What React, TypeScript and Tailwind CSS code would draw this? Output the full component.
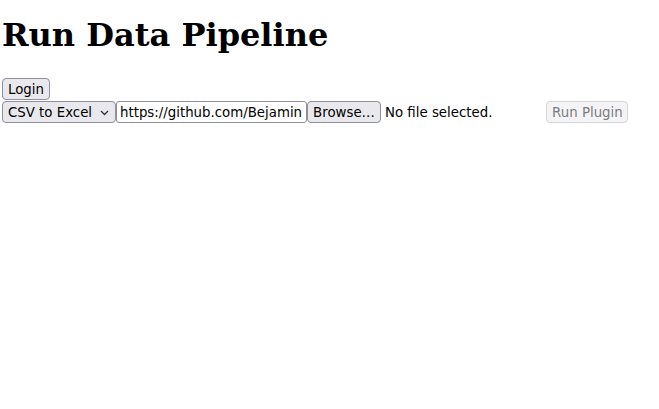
export default function App() {
  const btn =
    'h-[22px] px-[5px] pt-px border border-[#8f8f9d] rounded-[4px] bg-[#e9e9ed] text-black leading-none flex items-center'

  return (
    <div className="min-h-[409px] bg-white px-[2px] font-['DejaVu_Sans',sans-serif] text-[13.33px] text-black">
      {/* heading */}
      <h1 className="pt-[17px] pb-[24px] text-[32px] leading-[37px] font-bold font-['DejaVu_Serif',serif]">
        Run Data Pipeline
      </h1>

      <div className="flex">
        <button className={btn + ' w-[48px] justify-center'}>Login</button>
      </div>

      {/* plugin row */}
      <div className="mt-px flex items-center">
        <div className={btn + ' w-[114px] justify-between pl-[5px] pr-[6px]'}>
          <span>CSV to Excel</span>
          <svg width="9" height="6" viewBox="0 0 9 6" fill="none">
            <path d="M1 1l3.5 3.5L8 1" stroke="#333" strokeWidth="1.3" />
          </svg>
        </div>
        <div className="h-[22px] w-[191px] pt-px border border-[#8f8f9d] rounded-[3px] bg-white flex items-center pl-[3px] overflow-hidden whitespace-nowrap">
          https://github.com/Bejamin
        </div>
        <button className={btn + ' w-[74px] justify-center'}>Browse…</button>
        <span className="ml-[4px] pt-px">No file selected.</span>
        <button
          disabled
          className="ml-[54px] h-[22px] w-[82px] pt-px border border-[#d5d5db] rounded-[4px] bg-[#f4f4f6] text-[#7b7b7f] leading-none flex items-center justify-center"
        >
          Run Plugin
        </button>
      </div>
    </div>
  )
}
